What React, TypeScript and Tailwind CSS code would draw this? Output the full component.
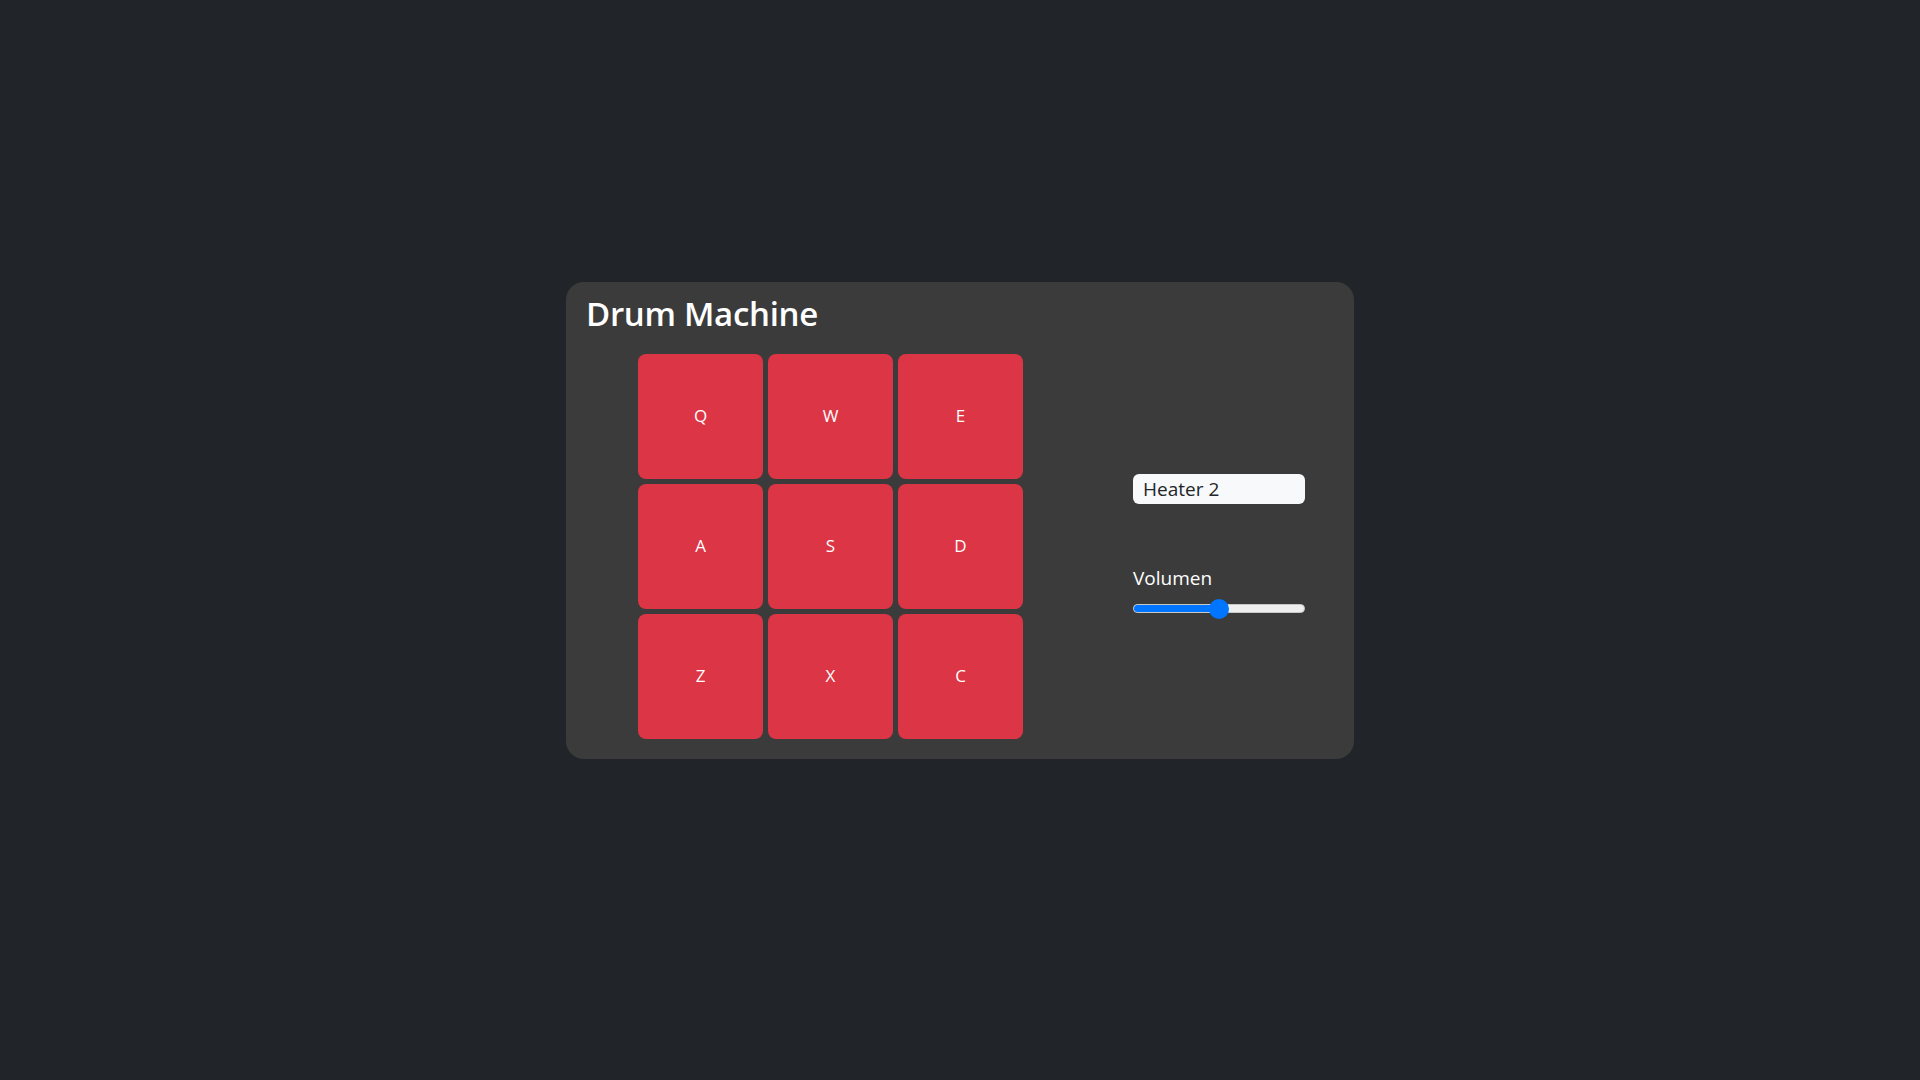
const pads = ["Q", "W", "E", "A", "S", "D", "Z", "X", "C"];

// ─── Pad ──────────────────────────────────────────────────────────────────────
function Pad({ label }: { label: string }) {
  return (
    <button className="w-[125px] h-[125px] rounded-lg bg-[#dc3545] text-white text-[17px] flex items-center justify-center">
      {label}
    </button>
  );
}

// ─── Volume slider ────────────────────────────────────────────────────────────
function Volume({ value }: { value: number }) {
  return (
    <div className="relative w-[172px] h-[20px] flex items-center">
      <div className="w-full h-[9px] rounded-full bg-[#efefef] border border-[#c8c8c8] overflow-hidden">
        <div className="h-full bg-[#0075ff]" style={{ width: `${value}%` }} />
      </div>
      <div
        className="absolute top-0 w-[20px] h-[20px] rounded-full bg-[#0075ff]"
        style={{ left: `calc(${value}% - 10px)` }}
      />
    </div>
  );
}

export default function App() {
  return (
    <div
      className="min-h-screen w-full bg-[#212529] flex justify-center pt-[282px]"
      style={{ fontFamily: '"Open Sans", "Noto Sans", sans-serif' }}
    >
      <div className="w-[788px] h-[477px] bg-[#3b3b3b] rounded-[18px] px-5 pt-[12px]">
        <h1 className="text-[33px] font-semibold text-white leading-[1.2] tracking-[-0.3px]">Drum Machine</h1>
        <div className="flex items-center mt-[20px]">
          <div className="ml-[52px] grid grid-cols-3 gap-[5px]">
            {pads.map((p) => (
              <Pad key={p} label={p} />
            ))}
          </div>
          <div className="ml-auto mr-[29px] flex flex-col">
            <div className="w-[172px] h-[30px] rounded-md bg-[#f8f9fa] text-[#212529] text-[19px] leading-[30px] px-[10px]">
              Heater 2
            </div>
            <label className="mt-[61px] text-[19px] text-white leading-[27px]">Volumen</label>
            <div className="mt-[7px]">
              <Volume value={50} />
            </div>
          </div>
        </div>
      </div>
    </div>
  );
}
